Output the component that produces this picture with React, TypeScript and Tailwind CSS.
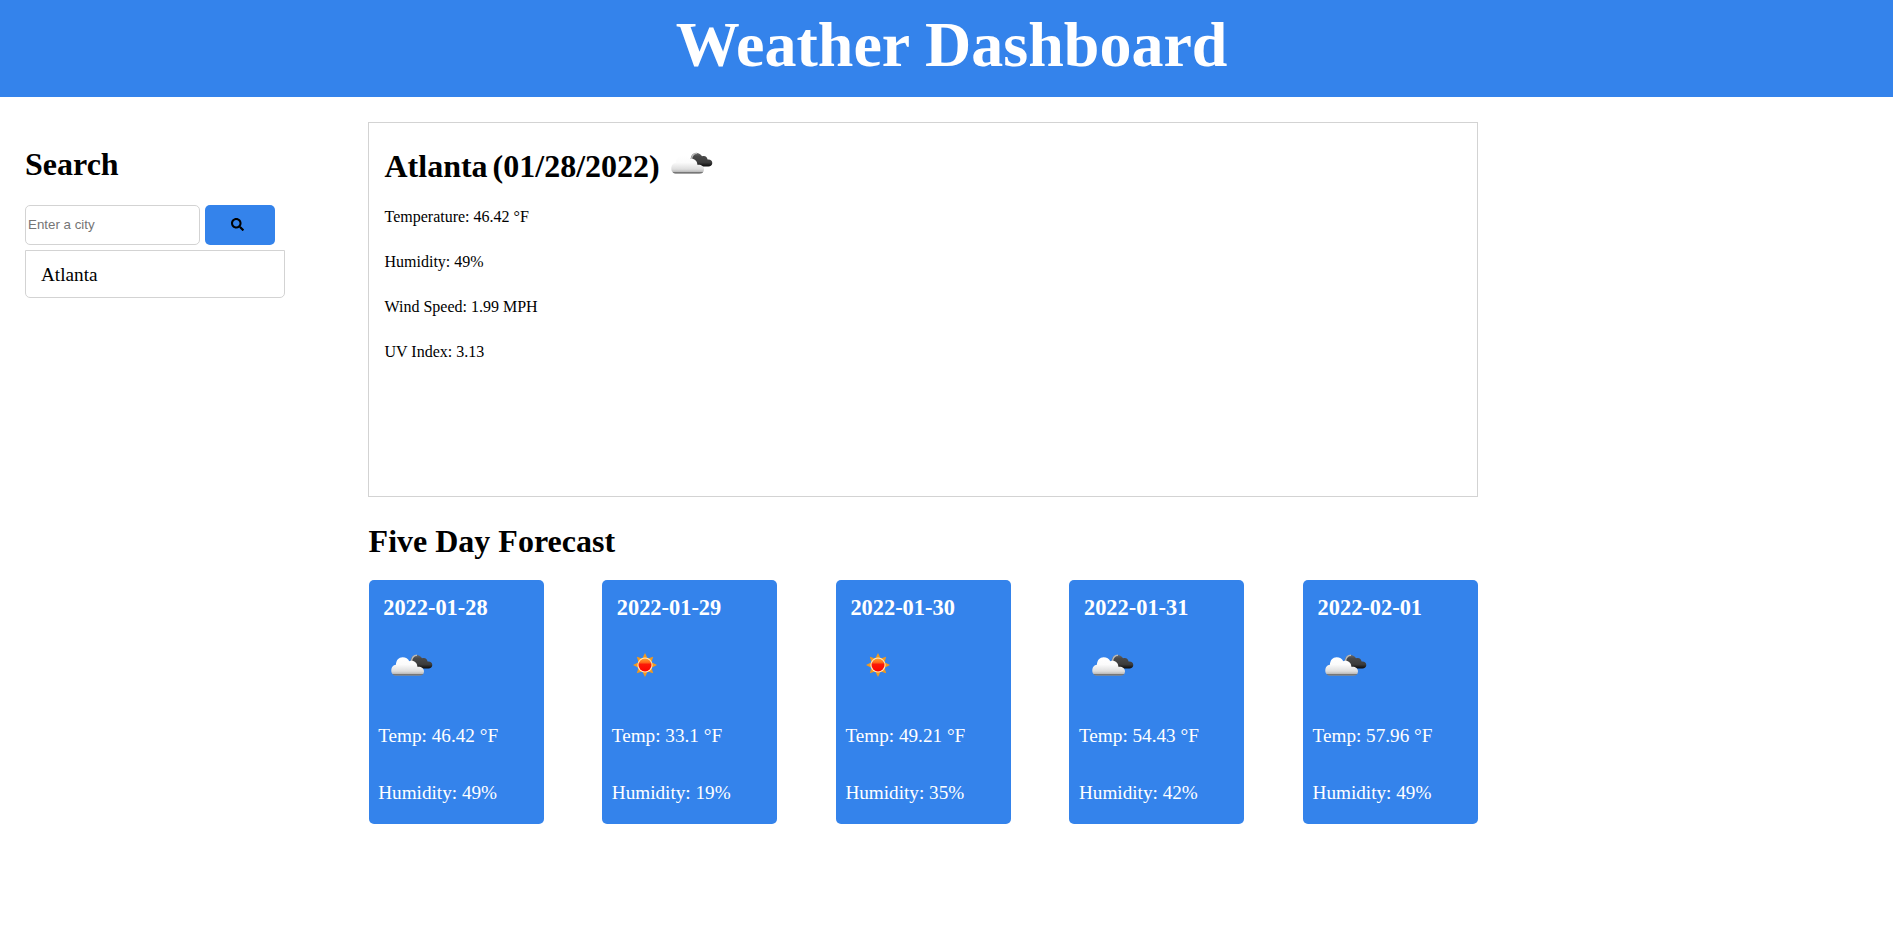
import React from "react";
import { FaSearch } from "react-icons/fa";

type Sky = "clouds" | "sun";

const days: { date: string; sky: Sky; temp: string; humidity: string }[] = [
  { date: "2022-01-28", sky: "clouds", temp: "46.42", humidity: "49" },
  { date: "2022-01-29", sky: "sun", temp: "33.1", humidity: "19" },
  { date: "2022-01-30", sky: "sun", temp: "49.21", humidity: "35" },
  { date: "2022-01-31", sky: "clouds", temp: "54.43", humidity: "42" },
  { date: "2022-02-01", sky: "clouds", temp: "57.96", humidity: "49" },
];

const details = ["Temperature: 46.42 °F", "Humidity: 49%", "Wind Speed: 1.99 MPH", "UV Index: 3.13"];

function Clouds({ id }: { id: string }) {
  return (
    <svg width="42" height="23" viewBox="0 0 42 23" className="block shrink-0">
      <defs>
        <linearGradient id={`${id}-dark`} x1="0" y1="0" x2="0" y2="1">
          <stop offset="0" stopColor="#6a6a6a" />
          <stop offset="0.25" stopColor="#494949" />
          <stop offset="0.7" stopColor="#3c3c3c" />
          <stop offset="1" stopColor="#0c0c0c" />
        </linearGradient>
        <linearGradient id={`${id}-light`} x1="0" y1="0" x2="0" y2="1">
          <stop offset="0" stopColor="#ffffff" />
          <stop offset="0.4" stopColor="#fbfbfb" />
          <stop offset="0.75" stopColor="#dedede" />
          <stop offset="0.89" stopColor="#bcbcbc" />
          <stop offset="0.92" stopColor="#747474" />
          <stop offset="1" stopColor="#8b8b8b" />
        </linearGradient>
      </defs>
      <path
        d="M19.5 8C19.8 3.6 22 1 25.3 1C28 1 30 2.3 31 4.3C34 3.2 36.2 4.8 36.6 7.6C39.4 7.2 41.3 8.8 41.3 11C41.3 13.3 39.6 14.4 37.4 14.4H24Z"
        fill={`url(#${id}-dark)`}
      />
      <path d="M20.3 7.5C20.8 3.7 22.7 1.2 26 1.2" fill="none" stroke="#b9b9b9" strokeWidth="1.5" />
      <path
        d="M5.8 21.8C2.2 21.8 0.3 19.3 0.3 16.7C0.3 13.3 2.3 11 4.9 10.8C5.1 6 7.8 3.2 11.6 3.2C14.8 3.2 17.1 4.6 18.3 7.2C22.5 5.8 26.3 8.4 26.4 12.8C30.3 12.4 33 14.4 33 17.4C33 20.1 31.1 21.8 28.2 21.8Z"
        fill={`url(#${id}-light)`}
      />
    </svg>
  );
}

function Sun({ id }: { id: string }) {
  return (
    <svg width="24" height="24" viewBox="-12 -12 24 24" className="block shrink-0">
      <defs>
        <linearGradient id={`${id}-core`} x1="0" y1="0" x2="0" y2="1">
          <stop offset="0" stopColor="#ffa02c" />
          <stop offset="0.3" stopColor="#ff6a1c" />
          <stop offset="0.45" stopColor="#fb1a08" />
          <stop offset="1" stopColor="#fd0500" />
        </linearGradient>
      </defs>
      <path
        d="M0 -12L2.7 -6.5L8.2 -8.2L6.5 -2.7L12 0L6.5 2.7L8.2 8.2L2.7 6.5L0 12L-2.7 6.5L-8.2 8.2L-6.5 2.7L-12 0L-6.5 -2.7L-8.2 -8.2L-2.7 -6.5Z"
        fill="#f3991d"
      />
      <circle r="7.6" fill="#ffe9c0" />
      <circle r="6.5" fill={`url(#${id}-core)`} />
    </svg>
  );
}

export default function App() {
  return (
    <div className="min-h-screen bg-white font-['Liberation_Serif',serif] text-black">
      <header className="h-[97px] bg-[#3483eb] pt-2 pl-2.5 text-center">
        <h1 className="text-[64px] leading-[73px] font-bold text-white">Weather Dashboard</h1>
      </header>

      <div className="flex">
        <aside className="w-[368px] shrink-0 pt-[49px] pl-[25px]">
          <h2 className="text-[32px] leading-9 font-bold">Search</h2>
          <div className="mt-[23px] flex gap-[5px]">
            <input
              placeholder="Enter a city"
              className="h-10 w-[175px] rounded-[5px] border border-[#d3d3d3] px-0.5 pb-0.5 font-['Liberation_Sans',sans-serif] text-[13.333px] placeholder:text-[#757575]"
            />
            <button className="flex h-10 w-[70px] items-center rounded-[5px] bg-[#3483eb] pb-px pl-[26px]">
              <FaSearch size={13} />
            </button>
          </div>
          <div className="mt-[5px] flex h-12 w-[260px] items-center rounded-b-[5px] border border-[#d3d3d3] pt-0.5 pl-[15px] text-[19.2px] leading-[22px]">
            Atlanta
          </div>
        </aside>

        <main className="w-[1110px] pt-[25px]">
          <section className="h-[375px] border border-[#d3d3d3] pt-[25px] pl-[15.5px]">
            <div className="flex h-9 items-start text-[32px] leading-9 font-bold">
              <h2>Atlanta</h2>
              <h2 className="ml-[5px]">(01/28/2022)</h2>
              <div className="mt-1 ml-[11.3px]">
                <Clouds id="today" />
              </div>
            </div>
            <div className="mt-6 flex flex-col gap-[27px] text-base leading-[18px]">
              {details.map((line) => (
                <p key={line}>{line}</p>
              ))}
            </div>
          </section>

          <h2 className="mt-[26px] pl-[0.6px] text-[32px] leading-9 font-bold">Five Day Forecast</h2>
          <div className="mt-[21px] flex justify-between pl-[0.6px]">
            {days.map((day) => (
              <article key={day.date} className="h-[244px] w-[175px] rounded-[5px] bg-[#3483eb] pt-[15px] pl-[9.6px] text-white">
                <h3 className="pl-[5px] text-[22.4px] leading-[25px] font-bold">{day.date}</h3>
                <div className="mt-[33px] flex h-6 pl-3">
                  {day.sky === "clouds" ? (
                    <div className="pt-px pl-[0.8px]">
                      <Clouds id={day.date} />
                    </div>
                  ) : (
                    <div className="pl-[8.8px]">
                      <Sun id={day.date} />
                    </div>
                  )}
                </div>
                <p className="mt-12 text-[19.2px] leading-[22px]">Temp: {day.temp} °F</p>
                <p className="mt-[35px] text-[19.2px] leading-[22px]">Humidity: {day.humidity}%</p>
              </article>
            ))}
          </div>
        </main>
      </div>
    </div>
  );
}
